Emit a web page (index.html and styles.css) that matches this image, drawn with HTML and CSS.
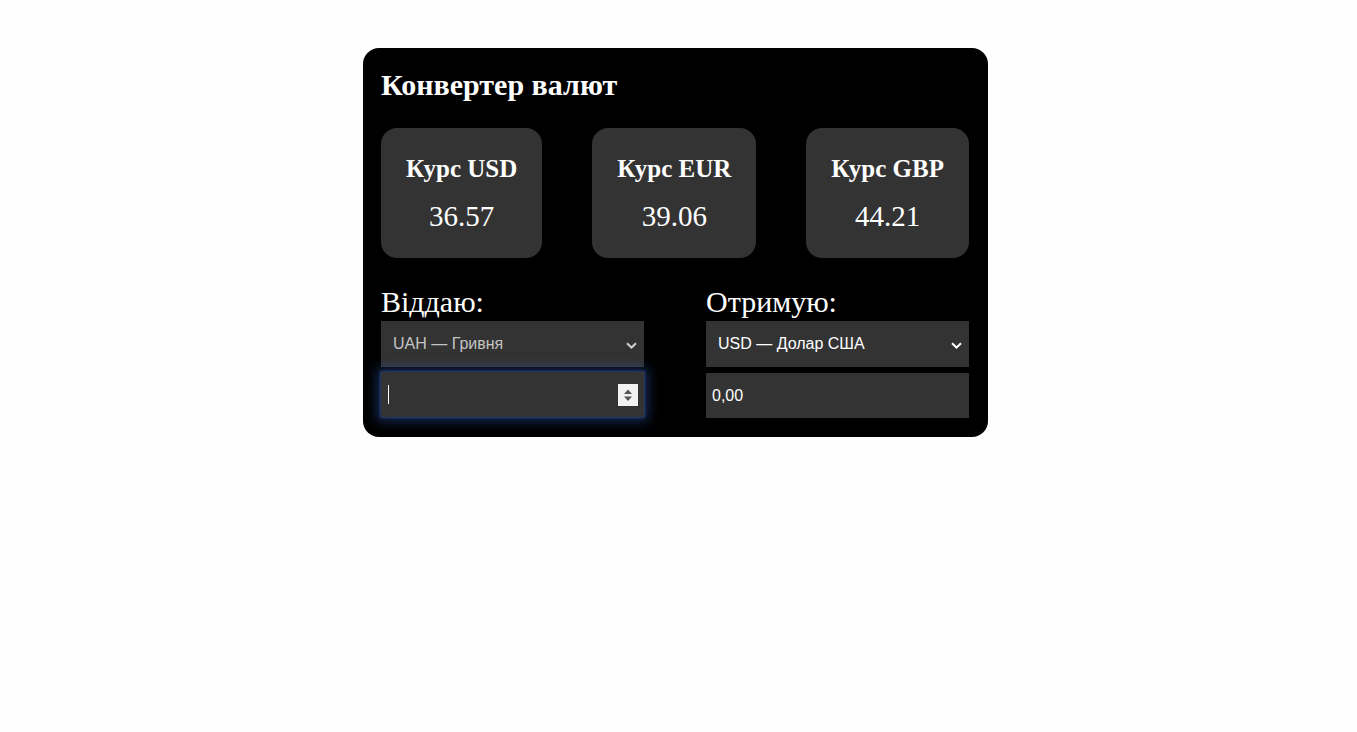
FILE: index.html
```html
<!DOCTYPE html>
<html lang="uk">
<head>
<meta charset="utf-8">
<title>Конвертер валют</title>
<link rel="stylesheet" href="styles.css">
</head>
<body>
<main class="card">
  <h1 class="title">Конвертер валют</h1>
  <section class="rates">
    <div class="rate">
      <h2 class="rate-name">Курс USD</h2>
      <div class="rate-value">36.57</div>
    </div>
    <div class="rate">
      <h2 class="rate-name">Курс EUR</h2>
      <div class="rate-value">39.06</div>
    </div>
    <div class="rate">
      <h2 class="rate-name">Курс GBP</h2>
      <div class="rate-value">44.21</div>
    </div>
  </section>
  <section class="exchange">
    <div class="col">
      <div class="label">Віддаю:</div>
      <div class="select muted">
        <span>UAH — Гривня</span>
        <svg class="chev" width="11" height="7" viewBox="0 0 11 7"><path d="M1 1.2 L5.5 5.5 L10 1.2" fill="none" stroke="currentColor" stroke-width="2"/></svg>
      </div>
      <div class="field focus">
        <span class="caret"></span>
        <span class="spin">
          <svg width="20" height="22" viewBox="0 0 20 22"><rect width="20" height="22" fill="#f2f2f2"/><path d="M6 10 L10 5.5 L14 10 Z" fill="#555"/><path d="M6 12.5 L10 17 L14 12.5 Z" fill="#555"/></svg>
        </span>
      </div>
    </div>
    <div class="col">
      <div class="label">Отримую:</div>
      <div class="select">
        <span>USD — Долар США</span>
        <svg class="chev" width="11" height="7" viewBox="0 0 11 7"><path d="M1 1.2 L5.5 5.5 L10 1.2" fill="none" stroke="currentColor" stroke-width="2"/></svg>
      </div>
      <div class="field result">0,00</div>
    </div>
  </section>
</main>
</body>
</html>
```
FILE: styles.css
```css
html, body {
  margin: 0;
  padding: 0;
  background: #fefefe;
}
body {
  font-family: "Liberation Serif", "Times New Roman", serif;
}
.card {
  box-sizing: border-box;
  width: 625px;
  margin: 48px 0 0 363px;
  padding: 20px 19px 19px 18px;
  background: #000;
  color: #fff;
  border-radius: 16px;
}
.title {
  margin: 0;
  font-size: 30px;
  line-height: 34px;
  font-weight: bold;
}
.rates {
  display: flex;
  justify-content: space-between;
  margin-top: 26px;
}
.rate {
  background: #333;
  border-radius: 16px;
  padding: 26px 25px 25px;
  text-align: center;
}
.rate-name {
  margin: 0;
  font-size: 25px;
  line-height: 30px;
  font-weight: bold;
}
.rate-value {
  margin-top: 15px;
  font-size: 29px;
  line-height: 34px;
}
.exchange {
  display: grid;
  grid-template-columns: 263px 263px;
  justify-content: space-between;
  margin-top: 27px;
}
.col {
  display: flex;
  flex-direction: column;
}
.label {
  font-size: 30px;
  line-height: 34px;
  margin-bottom: 2px;
}
.select {
  display: flex;
  align-items: center;
  justify-content: space-between;
  height: 46px;
  padding: 0 7px 0 12px;
  background: #333;
  color: #fff;
  font-family: "Liberation Sans", Arial, sans-serif;
  font-size: 16px;
}
.select.muted {
  color: #c4c4c4;
}
.select .chev {
  color: #fff;
  margin-top: 2px;
}
.select.muted .chev {
  color: #d0d0d0;
}
.field {
  display: flex;
  align-items: center;
  height: 45px;
  margin-top: 5px;
  padding: 0 6px;
  background: #333;
  color: #fff;
  font-family: "Liberation Sans", Arial, sans-serif;
  font-size: 16px;
}
.field.focus {
  justify-content: space-between;
  padding: 0 6px 0 7px;
  box-shadow: 0 0 2px 1px rgba(60, 95, 170, 0.55), 0 0 11px 4px rgba(45, 85, 175, 0.5);
}
.caret {
  width: 1px;
  height: 19px;
  background: #fff;
}
.spin {
  display: flex;
}
.field.result {
  margin-top: 6px;
}
```
